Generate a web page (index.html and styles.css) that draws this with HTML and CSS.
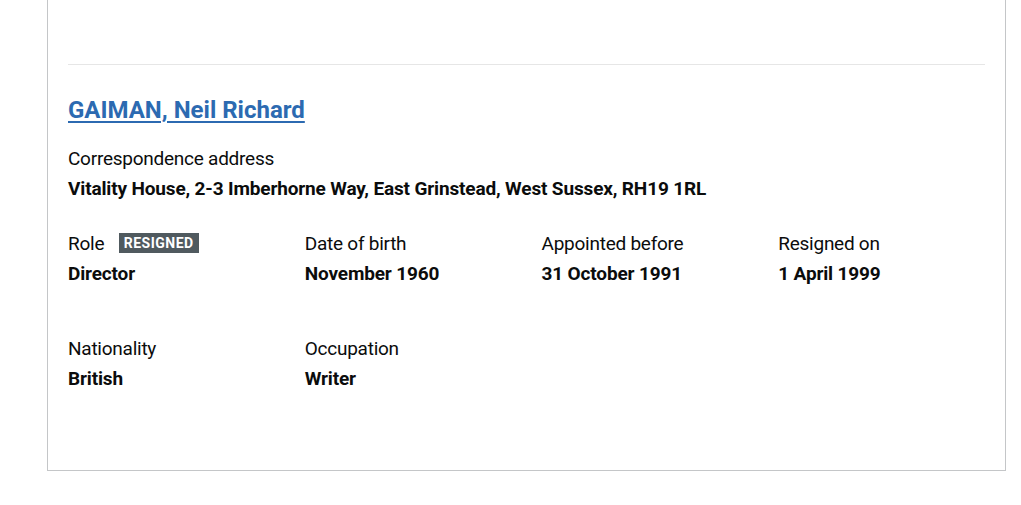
FILE: index.html
```html
<!DOCTYPE html>
<html lang="en">
<head>
<meta charset="utf-8">
<title>Officers</title>
<link rel="stylesheet" href="styles.css">
</head>
<body>
<div class="panel">
  <div class="officer">
    <h2 class="officer-name"><a href="#">GAIMAN, Neil Richard</a></h2>
    <dl class="field">
      <dt class="label">Correspondence address</dt>
      <dd class="value">Vitality House, 2-3 Imberhorne Way, East Grinstead, West Sussex, RH19 1RL</dd>
    </dl>
    <div class="grid-row first-row">
      <dl class="col">
        <dt class="label">Role <span class="tag">Resigned</span></dt>
        <dd class="value">Director</dd>
      </dl>
      <dl class="col">
        <dt class="label">Date of birth</dt>
        <dd class="value">November 1960</dd>
      </dl>
      <dl class="col">
        <dt class="label">Appointed before</dt>
        <dd class="value">31 October 1991</dd>
      </dl>
      <dl class="col">
        <dt class="label">Resigned on</dt>
        <dd class="value">1 April 1999</dd>
      </dl>
    </div>
    <div class="grid-row second-row">
      <dl class="col">
        <dt class="label">Nationality</dt>
        <dd class="value">British</dd>
      </dl>
      <dl class="col">
        <dt class="label">Occupation</dt>
        <dd class="value">Writer</dd>
      </dl>
    </div>
  </div>
</div>
</body>
</html>
```

FILE: styles.css
```css
html, body {
  margin: 0;
  padding: 0;
  background: #ffffff;
}

body {
  font-family: Roboto, "Liberation Sans", Arial, sans-serif;
  color: #0b0c0c;
  -webkit-font-smoothing: antialiased;
}

.panel {
  box-sizing: border-box;
  width: 959px;
  margin-left: 47px;
  padding: 64px 20px 79px;
  border: 1px solid #c4c6c8;
  border-top: 0;
}

.officer {
  border-top: 1px solid #e6e6e6;
}

.officer-name {
  margin: 30px 0 21px;
  font-size: 24px;
  line-height: 30px;
  font-weight: 700;
}

.officer-name a {
  color: #2c6ab1;
  text-decoration: underline;
  text-decoration-thickness: 2px;
  text-underline-offset: 3px;
}

.field,
.col {
  margin: 0;
}

.label {
  margin: 0;
  font-size: 19px;
  line-height: 25px;
  font-weight: 400;
  letter-spacing: -0.25px;
}

.value {
  margin: 5px 0 0;
  font-size: 19px;
  line-height: 25px;
  font-weight: 700;
  letter-spacing: -0.15px;
}

.grid-row {
  display: flex;
  margin: 0 -15px;
}

.col {
  box-sizing: border-box;
  width: 25%;
  padding: 0 15px;
}

.first-row {
  margin-top: 30px;
}

.second-row {
  margin-top: 50px;
}

.tag {
  display: inline-block;
  margin-left: 10px;
  padding: 0 5px;
  height: 20px;
  line-height: 20px;
  vertical-align: 2px;
  background: #505a5f;
  color: #ffffff;
  font-size: 14px;
  font-weight: 700;
  letter-spacing: 0.5px;
  text-transform: uppercase;
}
```
